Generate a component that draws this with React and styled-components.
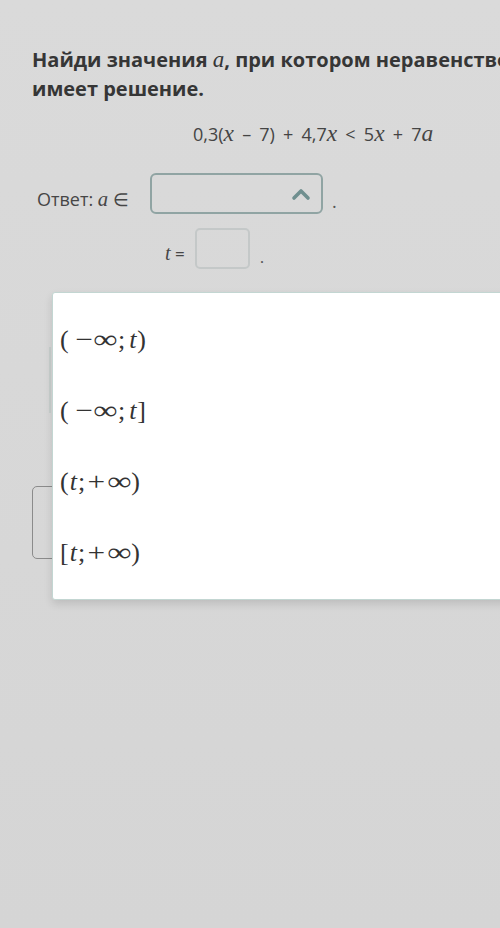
import React from "react";
import styled, { createGlobalStyle } from "styled-components";

const Global = createGlobalStyle`
  html, body { margin: 0; padding: 0; }
  body {
    background: #d6d6d6;
    width: 500px;
    height: 928px;
    overflow: hidden;
    font-family: "Open Sans", "Noto Sans", sans-serif;
  }
`;

const Page = styled.div`
  position: relative;
  width: 500px;
  height: 928px;
  overflow: hidden;
  background: linear-gradient(#dadada, #d5d5d5);
`;

const Content = styled.div`
  width: 700px;
  padding: 45px 0 0 32px;
  display: flex;
  flex-direction: column;
`;

const Title = styled.h1`
  margin: 0;
  font-size: 20px;
  line-height: 29px;
  font-weight: 700;
  color: #363636;
  white-space: nowrap;
`;

const MathVar = styled.span`
  font-family: "Liberation Serif", "DejaVu Serif", serif;
  font-style: italic;
  font-weight: 400;
  font-size: ${(p) => p.$size || "1.15em"};
`;

const Equation = styled.div`
  margin: 17px 0 0 161px;
  font-size: 18px;
  color: #444;
  white-space: nowrap;
  word-spacing: 3.5px;
`;

const AnswerRow = styled.div`
  margin-top: 26px;
  display: flex;
  align-items: flex-end;
  color: #464646;
  font-size: 18px;
`;

const Label = styled.span`
  margin-left: 5px;
  width: 113px;
  display: inline-block;
  padding-bottom: 3px;
`;

const SelectBox = styled.div`
  box-sizing: border-box;
  width: 173px;
  height: 41px;
  border: 2px solid #90a4a3;
  border-radius: 6px;
  display: flex;
  align-items: center;
  justify-content: flex-end;
  padding-right: 10px;
`;

const Dot = styled.span`
  margin-left: ${(p) => p.$gap || "9px"};
  margin-bottom: 1px;
  color: #555;
`;

const TRow = styled.div`
  margin-top: 14px;
  margin-left: 133px;
  display: flex;
  align-items: flex-end;
  color: #464646;
  font-size: 17px;
`;

const TLabel = styled.span`
  padding-bottom: 4px;
`;

const SmallBox = styled.div`
  box-sizing: border-box;
  width: 55px;
  height: 41px;
  margin-left: 10px;
  border: 2px solid #c4c8c8;
  border-radius: 5px;
`;

const Behind = styled.div`
  margin-top: 48px;
  display: flex;
  flex-direction: column;
`;

const FaintLine = styled.div`
  margin-left: 17px;
  margin-top: 30px;
  width: 2px;
  height: 66px;
  background: #c8cfcd;
`;

const ButtonEdge = styled.div`
  box-sizing: border-box;
  margin-top: 73px;
  width: 60px;
  height: 73px;
  border: 1.5px solid #8b8b8b;
  border-radius: 5px;
`;

const Menu = styled.ul`
  position: absolute;
  left: 52px;
  top: 292px;
  width: 470px;
  height: 308px;
  box-sizing: border-box;
  margin: 0;
  padding: 0;
  list-style: none;
  background: #fff;
  border: 1px solid #c3d6d2;
  border-radius: 3px;
  box-shadow: 0 4px 8px rgba(0, 0, 0, 0.12);
  display: flex;
  flex-direction: column;
  padding-top: 27px;
`;

const Item = styled.li`
  flex: 0 0 71px;
  padding-left: 7px;
  font-family: "Liberation Serif", "DejaVu Serif", serif;
  font-size: 26px;
  color: #333;
  line-height: 40px;
  white-space: nowrap;
`;

const T = styled.i`
  font-style: italic;
  margin: 0 1px 0 ${(p) => p.$l || "1px"};
`;

const Op = styled.span`
  display: inline-block;
  margin: 0 ${(p) => p.$r || "3px"} 0 ${(p) => p.$l || "3px"};
  transform: scaleX(1.2);
`;

const Inf = styled.span`
  display: inline-block;
  margin: 0 3px 0 3px;
  transform: scaleX(1.3);
`;

const Chevron = () => (
  <svg width="20" height="14" viewBox="0 0 20 14">
    <path d="M3 11 L10 4 L17 11" fill="none" stroke="#6f8f8f" strokeWidth="3.6" strokeLinecap="round" strokeLinejoin="round" />
  </svg>
);

export default function App() {
  return (
    <>
      <Global />
      <Page>
        <Content>
          <Title>
            Найди значения <MathVar>a</MathVar>, при котором неравенство
            <br />
            имеет решение.
          </Title>
          <Equation>
            0,3(<MathVar $size="1.3em">x</MathVar> – 7) + 4,7<MathVar $size="1.3em">x</MathVar> &lt; 5<MathVar $size="1.3em">x</MathVar> + 7<MathVar $size="1.3em">a</MathVar>
          </Equation>
          <AnswerRow>
            <Label>
              Ответ: <MathVar>a</MathVar> ∈
            </Label>
            <SelectBox>
              <Chevron />
            </SelectBox>
            <Dot>.</Dot>
          </AnswerRow>
          <TRow>
            <TLabel>
              <MathVar $size="1.2em">t</MathVar>&nbsp;=
            </TLabel>
            <SmallBox />
            <Dot $gap="10px">.</Dot>
          </TRow>
          <Behind>
            <FaintLine />
            <ButtonEdge />
          </Behind>
        </Content>
        <Menu>
          <Item>(<Op $l="8px" $r="2px">−</Op><Inf>∞</Inf>;<T $l="4px">t</T>)</Item>
          <Item>(<Op $l="8px" $r="2px">−</Op><Inf>∞</Inf>;<T $l="4px">t</T>]</Item>
          <Item>(<T>t</T>;<Op $l="4px" $r="3px">+</Op><Inf>∞</Inf>)</Item>
          <Item>[<T>t</T>;<Op $l="4px" $r="3px">+</Op><Inf>∞</Inf>)</Item>
        </Menu>
      </Page>
    </>
  );
}
